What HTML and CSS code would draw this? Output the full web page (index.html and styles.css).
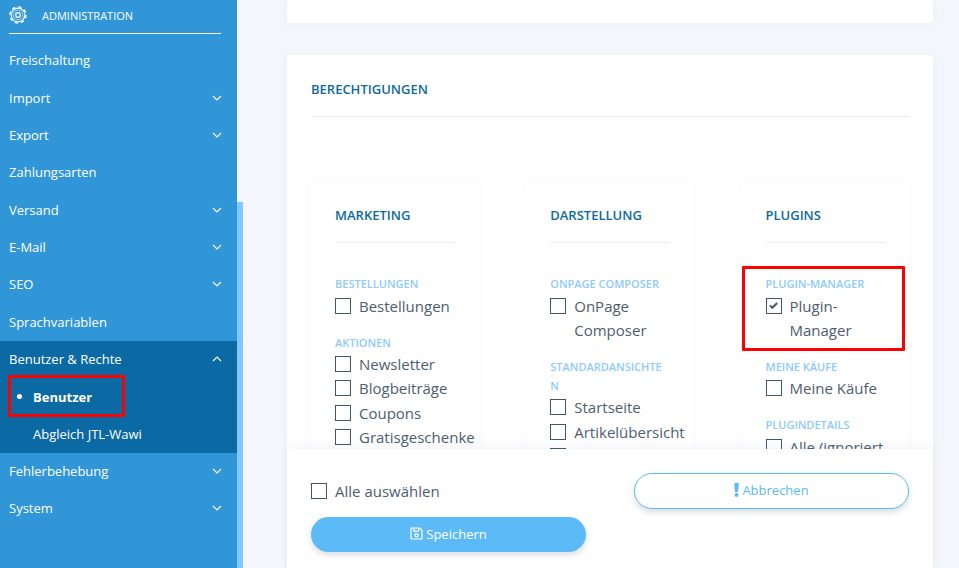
FILE: index.html
```html
<!DOCTYPE html>
<html lang="de">
<head>
    <meta charset="UTF-8">
    <meta name="viewport" content="width=device-width, initial-scale=1.0">
    <title>Berechtigungen</title>
    <link rel="stylesheet" href="styles.css">
</head>
<body>
    <div class="app">
        <aside class="sidebar">
            <div class="side-head">
                <svg class="gear" viewBox="0 0 18 18" width="18" height="18" fill="none" stroke="white">
                    <circle cx="9" cy="9" r="2.3" stroke-width="1.2"/>
                    <circle cx="9" cy="9" r="4.9" stroke-width="0.7" opacity="0.8"/>
                    <circle cx="9" cy="9" r="6.9" stroke-width="1.1"/>
                    <circle cx="9" cy="9" r="8.1" stroke-width="1.4" stroke-dasharray="3.2 3.16"/>
                </svg>
                <span>ADMINISTRATION</span>
            </div>
            <ul class="menu">
                <li class="menu-item">Freischaltung</li>
                <li class="menu-item">Import <svg class="chev" viewBox="0 0 10 6" width="10" height="6"><path d="M1 1l4 4 4-4"/></svg></li>
                <li class="menu-item">Export <svg class="chev" viewBox="0 0 10 6" width="10" height="6"><path d="M1 1l4 4 4-4"/></svg></li>
                <li class="menu-item">Zahlungsarten</li>
                <li class="menu-item">Versand <svg class="chev" viewBox="0 0 10 6" width="10" height="6"><path d="M1 1l4 4 4-4"/></svg></li>
                <li class="menu-item">E-Mail <svg class="chev" viewBox="0 0 10 6" width="10" height="6"><path d="M1 1l4 4 4-4"/></svg></li>
                <li class="menu-item">SEO <svg class="chev" viewBox="0 0 10 6" width="10" height="6"><path d="M1 1l4 4 4-4"/></svg></li>
                <li class="menu-item">Sprachvariablen</li>
                <li class="menu-open">
                    <div class="menu-item">Benutzer &amp; Rechte <svg class="chev" viewBox="0 0 10 6" width="10" height="6"><path d="M1 5l4-4 4 4"/></svg></div>
                    <div class="sub-item sub-active">Benutzer<span class="mark mark-side"></span></div>
                    <div class="sub-item">Abgleich JTL-Wawi</div>
                </li>
                <li class="menu-item">Fehlerbehebung <svg class="chev" viewBox="0 0 10 6" width="10" height="6"><path d="M1 1l4 4 4-4"/></svg></li>
                <li class="menu-item">System <svg class="chev" viewBox="0 0 10 6" width="10" height="6"><path d="M1 1l4 4 4-4"/></svg></li>
            </ul>
        </aside>
        <div class="scroll-track"><div class="scroll-thumb"></div></div>

        <main class="content">
            <div class="card card-top"></div>
            <section class="card card-rights">
                <h2 class="card-title">BERECHTIGUNGEN</h2>
                <div class="columns">
                    <div class="col">
                        <h3 class="col-title">MARKETING</h3>
                        <div class="group">
                            <div class="group-label">BESTELLUNGEN</div>
                            <label class="check"><span class="box"></span>Bestellungen</label>
                        </div>
                        <div class="group">
                            <div class="group-label">AKTIONEN</div>
                            <label class="check"><span class="box"></span>Newsletter</label>
                            <label class="check"><span class="box"></span>Blogbeiträge</label>
                            <label class="check"><span class="box"></span>Coupons</label>
                            <label class="check"><span class="box"></span>Gratisgeschenke</label>
                        </div>
                    </div>
                    <div class="col">
                        <h3 class="col-title">DARSTELLUNG</h3>
                        <div class="group">
                            <div class="group-label">ONPAGE COMPOSER</div>
                            <label class="check"><span class="box"></span>OnPage Composer</label>
                        </div>
                        <div class="group">
                            <div class="group-label">STANDARDANSICHTE<br>N</div>
                            <label class="check"><span class="box"></span>Startseite</label>
                            <label class="check"><span class="box"></span>Artikelübersicht</label>
                            <label class="check"><span class="box"></span>Artikeldetails</label>
                        </div>
                    </div>
                    <div class="col">
                        <h3 class="col-title">PLUGINS</h3>
                        <div class="group group-marked">
                            <span class="mark mark-plugin"></span>
                            <div class="group-label">PLUGIN-MANAGER</div>
                            <label class="check"><span class="box">
                                <svg viewBox="0 0 9 7" width="9" height="7"><path d="M.8 3.4l2.5 2.4L8.2 1" fill="none" stroke="#40566b" stroke-width="2"/></svg>
                            </span>Plugin-<br>Manager</label>
                        </div>
                        <div class="group">
                            <div class="group-label">MEINE KÄUFE</div>
                            <label class="check"><span class="box"></span>Meine Käufe</label>
                        </div>
                        <div class="group">
                            <div class="group-label">PLUGINDETAILS</div>
                            <label class="check"><span class="box"></span>Alle (ignoriert</label>
                        </div>
                    </div>
                </div>
            </section>

            <div class="action-bar">
                <div class="action-left">
                    <label class="check check-all"><span class="box"></span>Alle auswählen</label>
                    <button class="btn btn-save">
                        <svg viewBox="0 0 13 13" width="13" height="13" fill="none" stroke="white" stroke-width="1.2"><path d="M1.5 1h8l2.5 2.5v8a.5.5 0 0 1-.5.5h-10a.5.5 0 0 1-.5-.5v-10a.5.5 0 0 1 .5-.5z"/><path d="M3.8 1v3.2h4.8V1"/><circle cx="6.5" cy="8.3" r="1.7"/></svg>
                        Speichern
                    </button>
                </div>
                <button class="btn btn-cancel">
                    <svg viewBox="0 0 5 14" width="5" height="14" fill="#5cbbf6"><path d="M.2 .8A.8 .8 0 0 1 1 0h3a.8 .8 0 0 1 .8 .8L4 9H1z"/><circle cx="2.5" cy="12" r="2"/></svg>
                    Abbrechen
                </button>
            </div>
        </main>
    </div>
</body>
</html>
```

FILE: styles.css
```css
* {
    box-sizing: border-box;
    font-family: 'Open Sans', sans-serif;
}

html, body {
    margin: 0;
    padding: 0;
    height: 100%;
    overflow: hidden;
    background-color: #f4f6fb;
}

.app {
    display: flex;
    height: 568px;
    overflow: hidden;
}

/* sidebar */
.sidebar {
    width: 237px;
    flex: none;
    background-color: #3096d8;
    color: white;
}

.side-head {
    display: flex;
    align-items: center;
    gap: 15px;
    height: 34px;
    margin: 0 16px 0 9px;
    padding-bottom: 3px;
    border-bottom: 1px solid white;
    font-size: 11px;
}

.gear {
    flex: none;
}

.menu {
    list-style: none;
    margin: 0;
    padding: 7.8px 0 0;
}

.menu-item,
.sub-item {
    position: relative;
    display: flex;
    align-items: center;
    justify-content: space-between;
    height: 37.33px;
    padding: 0 15px 0 9px;
    font-size: 13px;
}

.sub-item {
    padding-left: 33px;
}

.sub-active {
    font-weight: 700;
    justify-content: flex-start;
}

.sub-active::before {
    content: "";
    position: absolute;
    left: 17px;
    top: 16px;
    width: 5px;
    height: 5px;
    border-radius: 50%;
    background-color: white;
}

.menu-open {
    margin-top: 0.1px;
    background-color: #0b6aa3;
}

.chev {
    fill: none;
    stroke: white;
    stroke-width: 1.2;
}

.mark {
    position: absolute;
    border: 3px solid #f00;
    border-radius: 1px;
}

.mark-side {
    left: 8px;
    top: -3px;
    width: 117px;
    height: 42px;
}

.mark-plugin {
    left: -23.5px;
    top: -8px;
    width: 163px;
    height: 85px;
}

.scroll-track {
    width: 6px;
    flex: none;
    padding-top: 202px;
    background-color: #f4f6fb;
}

.scroll-thumb {
    height: 100%;
    background-color: #80c8ff;
}

/* main */
.content {
    position: relative;
    flex: 1;
    padding: 0 26px 0 44px;
    overflow: hidden;
}

.card {
    background-color: white;
    border-radius: 4px;
    box-shadow: 0 1px 6px rgba(90, 110, 150, 0.06);
}

.card-top {
    height: 23px;
    margin-bottom: 32px;
}

.card-rights {
    padding: 0 24px;
    height: 620px;
}

.card-title {
    margin: 0;
    height: 62px;
    line-height: 68px;
    border-bottom: 1px solid #e8edf4;
    font-size: 13px;
    font-weight: 600;
    color: #0b6aa3;
}

.columns {
    display: flex;
    justify-content: space-between;
    margin-top: 66px;
}

.col {
    width: 167.5px;
    padding: 0 24px;
    border-radius: 4px;
    box-shadow: 0 0 8px rgba(90, 110, 150, 0.05);
}

.col-title {
    margin: 0 0 31px;
    height: 60px;
    padding-top: 23px;
    border-bottom: 1px solid #e8edf4;
    font-size: 13px;
    font-weight: 600;
    color: #0b6aa3;
}

.group {
    position: relative;
    margin-bottom: 14.7px;
}

.group-label {
    margin-bottom: 0.7px;
    font-size: 11px;
    line-height: 19px;
    font-weight: 600;
    color: #8ccbff;
}

.check {
    display: block;
    position: relative;
    padding-left: 24px;
    font-size: 15px;
    line-height: 24.2px;
    color: #4c5e70;
}

.box {
    position: absolute;
    left: 0;
    top: 4px;
    width: 16px;
    height: 16px;
    border: 1.5px solid #40566b;
    display: flex;
    align-items: center;
    justify-content: center;
}

/* bar at the bottom */
.action-bar {
    position: absolute;
    left: 44px;
    right: 26px;
    bottom: 0;
    height: 119px;
    padding: 24px 24px 0;
    display: flex;
    justify-content: space-between;
    background-color: white;
    box-shadow: 0 -4px 10px rgba(90, 110, 150, 0.06);
}

.action-left {
    width: 275px;
}

.check-all {
    margin: 6px 0 14px;
    line-height: 24px;
}

.btn {
    display: flex;
    align-items: center;
    justify-content: center;
    gap: 3px;
    width: 275px;
    height: 36px;
    padding: 0 0 2px;
    border-radius: 18px;
    font-size: 13px;
    box-shadow: 0 3px 6px rgba(60, 80, 110, 0.2);
}

.btn-save {
    height: 35px;
    border: none;
    background-color: #5cbbf6;
    color: white;
}

.btn-cancel {
    border: 1.5px solid #5cbbf6;
    background-color: white;
    color: #5cbbf6;
}
```
